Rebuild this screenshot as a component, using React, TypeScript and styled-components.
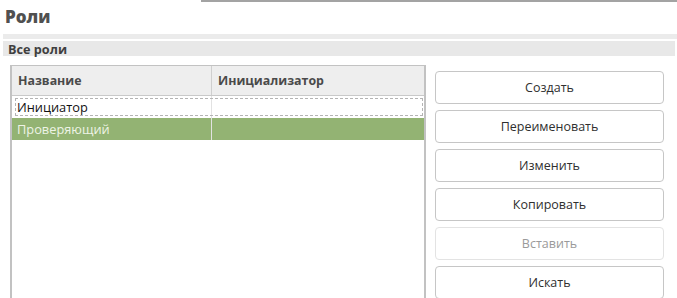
import React, { useState } from 'react'
import styled, { createGlobalStyle } from 'styled-components'

const GlobalStyle = createGlobalStyle`
  html, body {
    margin: 0;
    padding: 0;
    background: #ffffff;
    font-family: 'Open Sans', 'Noto Sans', sans-serif;
  }
`

const Page = styled.div`
  width: 677px;
  height: 298px;
  overflow: hidden;
  background: #fff;
`

const TopRule = styled.div`
  margin-left: 201px;
  height: 2px;
  background: #a3a3a3;
`

const Title = styled.h1`
  margin: 0;
  padding: 3px 0 0 5px;
  height: 29px;
  box-sizing: border-box;
  font-size: 17px;
  font-weight: 800;
  line-height: 24px;
  color: #505050;
`

const Band = styled.div`
  margin: 3px 0 0 3px;
  height: 5px;
  background: #ebebeb;
`

const SectionHeader = styled.div`
  margin: 2px 2px 0 3px;
  height: 15px;
  background: #e8e8e8;
  padding-left: 5px;
  font-size: 12.7px;
  font-weight: 700;
  line-height: 16px;
  color: #3f3f3f;
`

const Content = styled.div`
  display: flex;
  align-items: flex-start;
  padding: 9px 0 0 10px;
`

const TableBox = styled.div`
  width: 416px;
  height: 240px;
  box-sizing: border-box;
  border: 2px solid #c2c2c2;
  border-top-width: 1px;
  background: #fff;
`

const Row = styled.div<{ $selected?: boolean; $focused?: boolean }>`
  display: grid;
  grid-template-columns: 200px 1fr;
  height: 22px;
  position: relative;
  background: ${({ $selected }) => ($selected ? '#93b373' : 'transparent')};
  color: ${({ $selected }) => ($selected ? '#eef3e6' : '#111')};
  font-size: 12.8px;
  line-height: 22px;
  ${({ $focused }) =>
    $focused &&
    `
    &::after {
      content: '';
      position: absolute;
      inset: 2px 1px 2px 3px;
      border: 1px dashed #b4b4b4;
      pointer-events: none;
    }
  `}
`

const HeaderRow = styled.div`
  display: grid;
  grid-template-columns: 200px 1fr;
  height: 30px;
  background: #eeeeee;
  border-bottom: 1px solid #c9c9c9;
  box-sizing: border-box;
`

const HeadCell = styled.div<{ $divider?: boolean }>`
  padding-left: 6px;
  font-size: 12.4px;
  font-weight: 700;
  line-height: 29px;
  color: #4a4a4a;
  border-right: ${({ $divider }) => ($divider ? '1px solid #cfcfcf' : 'none')};
`

const Cell = styled.div<{ $divider?: boolean }>`
  padding-left: 5px;
  white-space: nowrap;
  border-right: ${({ $divider }) => ($divider ? '1px solid #e2e2e2' : 'none')};
`

const Actions = styled.div`
  display: flex;
  flex-direction: column;
  gap: 6px;
  margin-left: 9px;
  padding-top: 6px;
  width: 229px;
`

const ActionButton = styled.button`
  height: 33px;
  box-sizing: border-box;
  border: 1px solid #c6c6c6;
  border-radius: 4px;
  background: #ffffff;
  font-family: 'Open Sans', 'Noto Sans', sans-serif;
  font-size: 12.5px;
  color: #2f2f2f;
  cursor: pointer;

  &:disabled {
    border-color: #e3e3e3;
    color: #9a9a9a;
    cursor: default;
  }
`

const roles = [
  { name: 'Инициатор', initializer: '' },
  { name: 'Проверяющий', initializer: '' },
]

const actions = [
  { label: 'Создать' },
  { label: 'Переименовать' },
  { label: 'Изменить' },
  { label: 'Копировать' },
  { label: 'Вставить', disabled: true },
  { label: 'Искать' },
]

export default function App() {
  const [selected, setSelected] = useState<number>(1)

  return (
    <Page>
      <GlobalStyle />
      <TopRule />
      <Title>Роли</Title>
      <Band />
      <SectionHeader>Все роли</SectionHeader>
      <Content>
        <TableBox>
          <HeaderRow>
            <HeadCell $divider>Название</HeadCell>
            <HeadCell>Инициализатор</HeadCell>
          </HeaderRow>
          {roles.map((role, i) => (
            <Row key={role.name} $selected={selected === i} $focused={i === 0} onClick={() => setSelected(i)}>
              <Cell $divider>{role.name}</Cell>
              <Cell>{role.initializer}</Cell>
            </Row>
          ))}
        </TableBox>
        <Actions>
          {actions.map((a) => (
            <ActionButton key={a.label} disabled={a.disabled}>
              {a.label}
            </ActionButton>
          ))}
        </Actions>
      </Content>
    </Page>
  )
}
